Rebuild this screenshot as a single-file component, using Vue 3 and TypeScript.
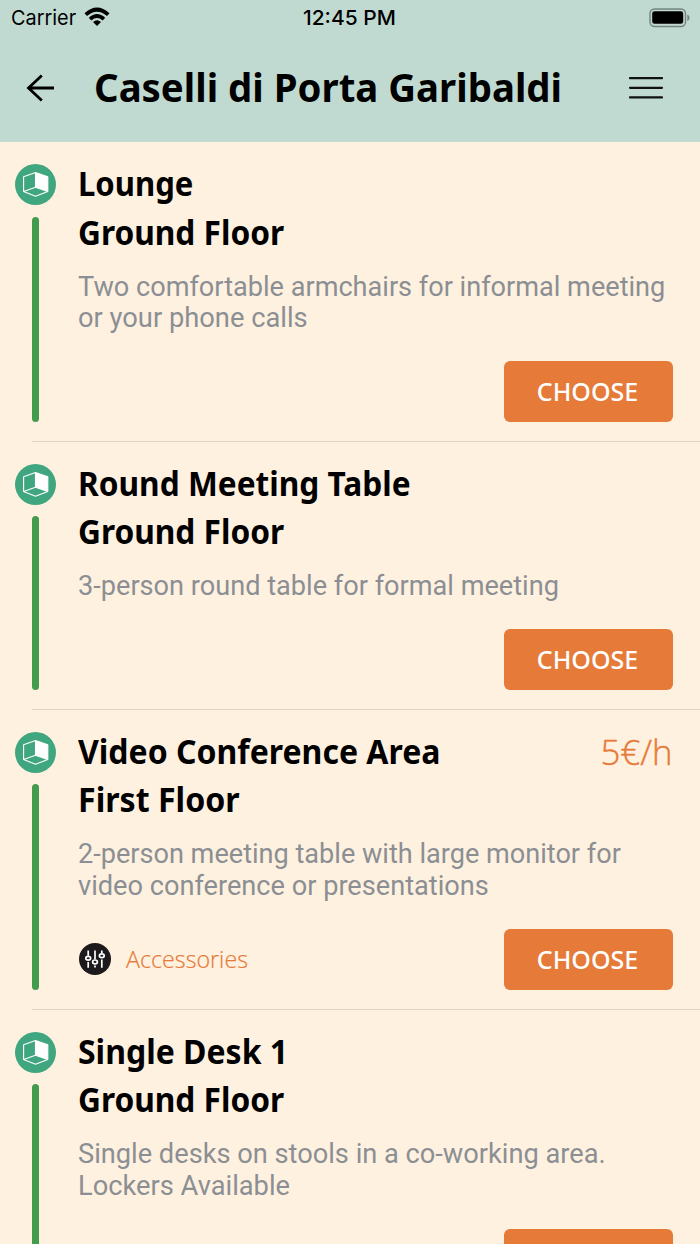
<script setup lang="ts">
import type { Directive } from 'vue'

interface Line {
  text: string
  width: number
}

interface Space {
  name: Line
  floor: Line
  description: Line[]
  price?: Line
  accessories?: boolean
}

// Scales a line horizontally so that it takes up the given width.
const vFit: Directive<HTMLElement, number> = {
  mounted(el, binding) {
    const natural = el.offsetWidth
    if (natural > 0) el.style.transform = `scaleX(${binding.value / natural})`
  },
}

const groundFloor: Line = { text: 'Ground Floor', width: 206 }

const spaces: Space[] = [
  {
    name: { text: 'Lounge', width: 115 },
    floor: groundFloor,
    description: [
      { text: 'Two comfortable armchairs for informal meeting', width: 587.5 },
      { text: 'or your phone calls', width: 229.5 },
    ],
  },
  {
    name: { text: 'Round Meeting Table', width: 332.5 },
    floor: groundFloor,
    description: [{ text: '3-person round table for formal meeting', width: 480.5 }],
  },
  {
    name: { text: 'Video Conference Area', width: 362 },
    floor: { text: 'First Floor', width: 162 },
    description: [
      { text: '2-person meeting table with large monitor for', width: 543 },
      { text: 'video conference or presentations', width: 410.5 },
    ],
    price: { text: '5€/h', width: 72.5 },
    accessories: true,
  },
  {
    name: { text: 'Single Desk 1', width: 210 },
    floor: groundFloor,
    description: [
      { text: 'Single desks on stools in a co-working area.', width: 528 },
      { text: 'Lockers Available', width: 212 },
    ],
  },
]
</script>

<template>
  <div class="screen">
    <header class="header">
      <div class="status">
        <div class="carrier">
          <span v-fit="65" class="fit">Carrier</span>
        </div>
        <svg class="wifi" viewBox="0 0 26 19" width="26" height="19">
          <path d="M.5 6.2Q13-5 25.5 6.2L23 9Q13 .3 3 9Z" />
          <path d="M4.8 10.8Q13 3.3 21.2 10.8L18.7 13.4Q13 8.5 7.3 13.4Z" />
          <path d="M9 15Q13 11.5 17 15L13 19Z" />
        </svg>
        <div class="clock"><span v-fit="93" class="fit">12:45 PM</span></div>
        <svg class="battery" viewBox="0 0 42 20" width="42" height="20">
          <rect x="1" y="1" width="35.5" height="17.5" rx="4.5" fill="none" stroke="#74857e" stroke-width="1.4" />
          <rect x="3.2" y="3.2" width="31" height="12.6" rx="2.3" />
          <path d="M38.3 6.5q2.3 1 2.3 3.2t-2.3 3.2z" fill="#74857e" />
        </svg>
      </div>
      <div class="bar">
        <svg class="back" viewBox="0 0 30 28" width="30" height="28">
          <path d="M28 14H2.5M15.8 1.5L2.5 14l13.3 12.5" fill="none" stroke="#000" stroke-width="2.8" />
        </svg>
        <h1 class="title"><span v-fit="468" class="fit">Caselli di Porta Garibaldi</span></h1>
        <svg class="menu" viewBox="0 0 36 24" width="36" height="24">
          <path d="M2 2.2h32M2 11.8h32M2 21.4h32" stroke="#111" stroke-width="2.2" stroke-linecap="round" />
        </svg>
      </div>
    </header>

    <main class="list">
      <section v-for="(space, index) in spaces" :key="index" class="row">
        <div class="rail">
          <svg class="cube" viewBox="0 0 41 41" width="41" height="41">
            <circle cx="20.5" cy="20.5" r="20.5" fill="#40a680" />
            <path
              d="M20.5 8.6L32.8 12.8V27.4L20.5 32.3L8.6 27.4V12.8ZM20.5 8.6V23.2M8.6 27.4L20.5 23.2L32.8 27.4"
              fill="none"
              stroke="#fff"
              stroke-width="1.1"
              stroke-linejoin="round"
            />
            <path d="M20.5 8.6L32.8 12.8V27.4L20.5 23.2Z" fill="#fff" />
          </svg>
          <div class="track"></div>
        </div>
        <div class="body">
          <div class="head">
            <h2 class="name"><span v-fit="space.name.width" class="fit">{{ space.name.text }}</span></h2>
            <div v-if="space.price" class="price">
              <span v-fit="space.price.width" class="fit right">{{ space.price.text }}</span>
            </div>
          </div>
          <h3 class="name floor"><span v-fit="space.floor.width" class="fit">{{ space.floor.text }}</span></h3>
          <div class="description">
            <div v-for="line in space.description" :key="line.text">
              <span v-fit="line.width" class="fit">{{ line.text }}</span>
            </div>
          </div>
          <div class="actions">
            <div v-if="space.accessories" class="accessories">
              <svg viewBox="0 0 32 32" width="32" height="32">
                <circle cx="16" cy="16" r="16" fill="#1c1a1d" />
                <g fill="none" stroke="#fff" stroke-width="1.7">
                  <path d="M9.2 7.5v5.2M9.2 19v5.7M16 7.5v8.8M16 22.5v2M22.8 7.5v2.6M22.8 16.5v8.2" />
                  <ellipse cx="9.2" cy="15.3" rx="2.4" ry="1.9" />
                  <ellipse cx="16" cy="18.9" rx="2.4" ry="1.9" />
                  <ellipse cx="22.8" cy="12.7" rx="2.4" ry="1.9" />
                </g>
              </svg>
              <span class="label"><span v-fit="122" class="fit">Accessories</span></span>
            </div>
            <button class="choose" type="button"><span v-fit="101" class="fit center">CHOOSE</span></button>
          </div>
        </div>
      </section>
    </main>
  </div>
</template>

<style>
body {
  margin: 0;
  overflow: hidden;
}
</style>

<style scoped>
.screen {
  width: 700px;
  height: 1244px;
  overflow: hidden;
  background: #fff1e0;
  color: #000;
  font-family: "Noto Sans", "Open Sans", sans-serif;
}
.fit {
  display: inline-block;
  white-space: nowrap;
  transform-origin: left center;
}
.fit.right {
  transform-origin: right center;
}
.fit.center {
  transform-origin: center;
}
.header {
  height: 142px;
  background: #c1dad1;
}
.status {
  display: grid;
  grid-template-columns: 73px 231px 1fr 51px;
  grid-template-rows: 36px;
  align-items: center;
  padding-left: 11px;
  height: 36px;
  font: 400 20.5px/36px Inter, sans-serif;
}
.wifi {
  margin-top: -4px;
}
.clock {
  margin-left: -12px;
  font-weight: 500;
}
.battery {
  margin-top: -1px;
}
.carrier {
  white-space: nowrap;
}
.bar {
  display: flex;
  align-items: center;
  height: 104px;
  padding: 0 36px 0 26px;
}
.title {
  flex: 1;
  margin: -2px 0 0 38px;
  font-size: 40px;
  font-weight: 700;
  line-height: 56px;
}
.row {
  display: flex;
  box-sizing: border-box;
  padding: 22px 27px 20.1px 15px;
  background: linear-gradient(#ded3c5, #ded3c5) 32px 100% / 100% 1px no-repeat;
}
.rail {
  display: flex;
  flex-direction: column;
  align-items: center;
  width: 41px;
  margin-right: 22px;
}
.cube {
  flex: none;
}
.track {
  flex: 1;
  width: 7px;
  margin-top: 11.5px;
  border-radius: 4px;
  background: #439b4e;
}
.body {
  flex: 1;
  min-width: 0;
}
.head {
  display: flex;
  justify-content: space-between;
  height: 48.2px;
}
.name {
  margin: -0.7px 0 0;
  height: 40px;
  font-size: 33.5px;
  font-weight: 700;
  line-height: 40px;
}
.price {
  color: #e67a39;
  font: 300 35px/40px "Open Sans", sans-serif;
  -webkit-text-stroke: 0.4px #e67a39;
}
.description {
  margin-top: 20px;
  color: #8b8f93;
  font: 400 27px/31.6px Roboto, sans-serif;
}
.actions {
  display: flex;
  align-items: center;
  justify-content: flex-end;
  height: 60.5px;
  margin-top: 26.5px;
}
.accessories {
  display: flex;
  align-items: center;
  margin-right: auto;
  padding-left: 1px;
}
.label {
  margin-left: 14.5px;
  color: #e67a39;
  font: 300 24px/32px "Open Sans", sans-serif;
  -webkit-text-stroke: 0.2px #e67a39;
}
.choose {
  display: flex;
  align-items: center;
  justify-content: center;
  width: 169px;
  height: 60.5px;
  padding: 0 2px 1px 0;
  border: 0;
  border-radius: 6px;
  background: #e67a39;
  color: #fff;
  font: 500 25px/24px "Noto Sans", sans-serif;
}
</style>
